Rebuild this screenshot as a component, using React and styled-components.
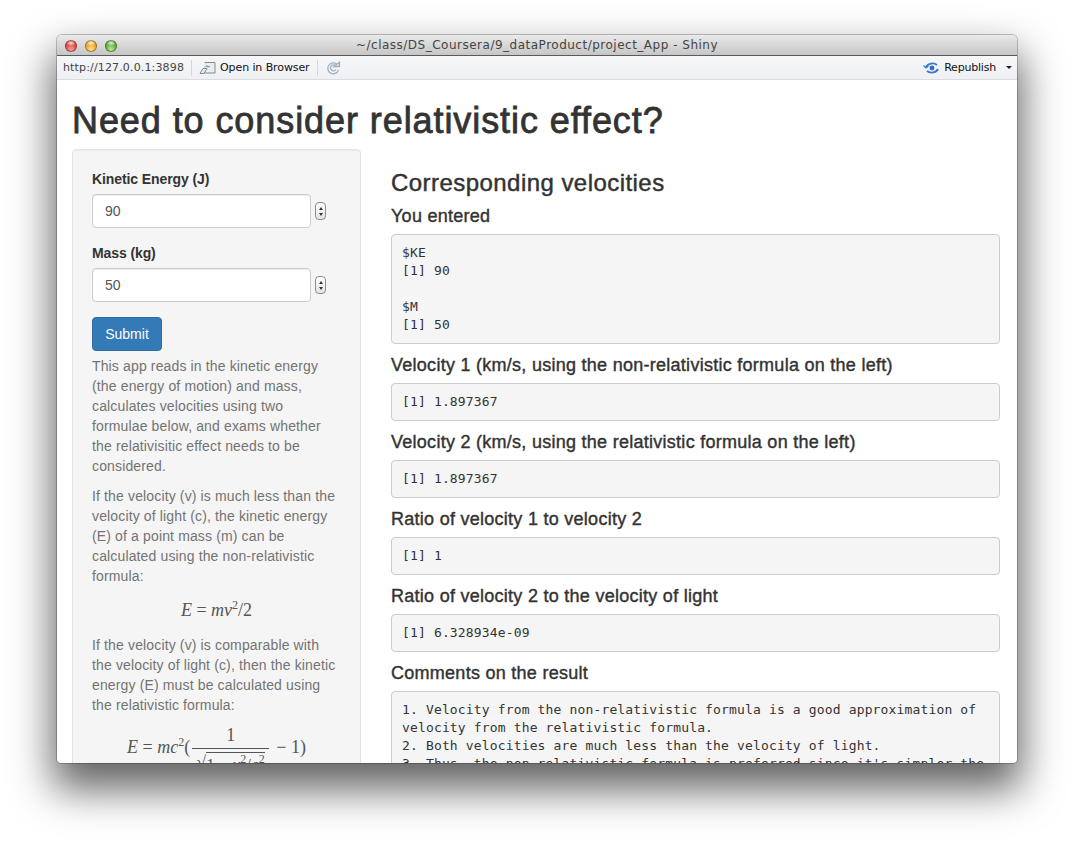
import styled, { createGlobalStyle } from "styled-components";

const Global = createGlobalStyle`
  html, body { margin: 0; padding: 0; background: #fff; }
  * { box-sizing: border-box; }
`;

const Page = styled.div`
  width: 1074px;
  height: 842px;
  padding: 35px 57px 0;
  overflow: hidden;
`;

const Win = styled.div`
  width: 960px;
  height: 728px;
  display: flex;
  flex-direction: column;
  border-radius: 5px 5px 4px 4px;
  overflow: hidden;
  background: #fff;
  box-shadow: 0 0 0 1px rgba(0, 0, 0, 0.22), 0 22px 42px 4px rgba(0, 0, 0, 0.62);
`;

const TitleBar = styled.div`
  height: 21px;
  flex: none;
  display: flex;
  align-items: center;
  justify-content: center;
  position: relative;
  background: linear-gradient(#e9e9e9, #c6c6c6);
  border-bottom: 1px solid #5a5a5a;
  font: 12px "DejaVu Sans", sans-serif;
  letter-spacing: 0.5px;
  color: #444;
`;

const Lights = styled.div`
  position: absolute;
  left: 8px;
  top: 5px;
  display: flex;
  gap: 8px;
`;

const Light = styled.span`
  width: 12px;
  height: 12px;
  border-radius: 50%;
  border: 1px solid rgba(0, 0, 0, 0.35);
  background: radial-gradient(ellipse 5px 3px at 50% 20%, rgba(255, 255, 255, 0.85), transparent),
    radial-gradient(circle at 50% 85%, ${(p) => p.$hi} 0%, ${(p) => p.$c} 65%);
`;

const ToolBar = styled.div`
  height: 24px;
  flex: none;
  display: flex;
  align-items: center;
  padding: 0 5px 0 6px;
  background: linear-gradient(#f6f7f9, #eef0f3);
  border-bottom: 1px solid #dcdcdc;
  font: 11px "DejaVu Sans", sans-serif;
  color: #111;
`;

const Url = styled.span`
  color: #444;
  letter-spacing: 0.15px;
`;

const Sep = styled.span`
  width: 1px;
  height: 16px;
  background: #d4d6d9;
  margin: 0 7px;
`;

const OpenLabel = styled.span`
  margin-left: 3px;
  letter-spacing: -0.1px;
`;

const Publish = styled.span`
  margin-left: auto;
  display: flex;
  align-items: center;
  gap: 3px;
  letter-spacing: -0.2px;
`;

const Caret = styled.span`
  width: 0;
  height: 0;
  margin-left: 7px;
  border-left: 3px solid transparent;
  border-right: 3px solid transparent;
  border-top: 3px solid #222;
`;

const Content = styled.div`
  flex: 1;
  overflow: hidden;
  padding: 0 15px;
  font: 14px/20px "Liberation Sans", sans-serif;
  color: #333;
`;

const H1 = styled.h1`
  margin: 21px 0 8px;
  font-size: 36px;
  line-height: 40px;
  font-weight: 500;
  letter-spacing: 0.92px;
  color: #333;
  -webkit-text-stroke: 0.8px #333;
`;

const Row = styled.div`
  display: flex;
  align-items: flex-start;
`;

const Side = styled.div`
  width: 289px;
  flex: none;
  padding: 19px;
  background: #f5f5f5;
  border: 1px solid #e3e3e3;
  border-radius: 4px;
  box-shadow: inset 0 1px 1px rgba(0, 0, 0, 0.05);
`;

const Field = styled.div`
  margin-bottom: 15px;
`;

const Label = styled.label`
  display: block;
  font-weight: bold;
  letter-spacing: -0.1px;
  margin-bottom: 5px;
`;

const InputRow = styled.div`
  display: flex;
  align-items: center;
`;

const Input = styled.div`
  width: 219px;
  height: 34px;
  padding: 6px 12px;
  background: #fff;
  border: 1px solid #ccc;
  border-radius: 4px;
  box-shadow: inset 0 1px 1px rgba(0, 0, 0, 0.075);
  color: #555;
`;

const Spin = styled.div`
  width: 11px;
  height: 18px;
  margin-left: 4px;
  border: 1px solid #8c8c8c;
  border-radius: 4px;
  background: linear-gradient(#fff, #e4e4e4);
  display: flex;
  flex-direction: column;
  align-items: center;
  justify-content: center;
  gap: 3px;
`;

const Arrow = styled.span`
  width: 0;
  height: 0;
  border-left: 2px solid transparent;
  border-right: 2px solid transparent;
  ${(p) => (p.$up ? "border-bottom: 3px solid #333;" : "border-top: 3px solid #333;")}
`;

const Submit = styled.div`
  width: 70px;
  height: 34px;
  display: flex;
  align-items: center;
  justify-content: center;
  margin-bottom: 5px;
  background: #337ab7;
  border: 1px solid #2e6da4;
  border-radius: 4px;
  color: #fff;
`;

const Help = styled.p`
  margin: 5px 0 10px;
  color: #737373;
  letter-spacing: 0.14px;
`;

const Formula = styled.div`
  text-align: center;
  margin: ${(p) => p.$m};
  font: 18px/20px "Liberation Serif", serif;
  color: #555;
  white-space: pre;

  sup { font-size: 12px; line-height: 0; vertical-align: 7px; }
`;

const Frac = styled.span`
  display: inline-flex;
  flex-direction: column;
  align-items: center;
  vertical-align: middle;
  margin: 0 7px 0 2px;
`;

const Num = styled.span`
  height: 24px;
  width: 77px;
  text-align: center;
  border-bottom: 1px solid #555;
`;

const Den = styled.span`
  display: flex;
  height: 24px;
  padding-top: 3px;
  line-height: 22px;
  font-size: 17px;
`;

const Radicand = styled.span`
  border-top: 1px solid #555;
  padding-top: 1px;
`;

const Main = styled.div`
  flex: 1;
  padding-left: 30px;
  padding-right: 2px;
`;

const H3 = styled.h3`
  margin: 21px 0 10px;
  font-size: 24px;
  line-height: 26px;
  font-weight: 500;
  letter-spacing: 0.45px;
  -webkit-text-stroke: 0.45px #333;
`;

const H4 = styled.h4`
  margin: 10px 0 8px;
  font-size: 18px;
  line-height: 20px;
  font-weight: 500;
  letter-spacing: 0.27px;
  -webkit-text-stroke: 0.4px #333;
`;

const Pre = styled.pre`
  margin: 0 0 11px;
  padding: 9px 10px;
  background: #f5f5f5;
  border: 1px solid #ccc;
  border-radius: 4px;
  font: 13px/18px "DejaVu Sans Mono", monospace;
  color: #333;
  letter-spacing: 0.15px;
  white-space: pre-wrap;
`;

const ReloadIcon = () => (
  <svg width="16" height="16" viewBox="0 0 16 16" fill="none" stroke="#9fb0c2" strokeWidth="1.3">
    <path d="M13 5.5A5.5 5.5 0 1 0 13.5 10" />
    <path d="M11 9.5A3 3 0 1 1 11 6.2" />
    <path d="M9 6.5h5.5V2z" fill="#dfe6ee" />
  </svg>
);

const OpenIcon = () => (
  <svg width="18" height="14" viewBox="0 0 18 14" fill="#e9edf2" stroke="#7f8b97" strokeWidth="1">
    <path d="M5.5 1.500h10.500v10.500H3" />
    <path d="M1 12.500l3-5h4l-3 5z" />
    <path d="M6 6.500l2-2v1.200h3" fill="none" />
  </svg>
);

const PublishIcon = () => (
  <svg width="18" height="12" viewBox="0 0 18 12" fill="none" stroke="#3b78c8" strokeWidth="1.8">
    <circle cx="9" cy="6" r="2.400" fill="#2f6fd0" stroke="none" />
    <path d="M3 5C5 1 11 0.500 14 3" />
    <path d="M0.500 3.500L3 6l2.500-2" strokeWidth="1.200" />
    <path d="M15 7c-2 4-8 4.500-11 2" />
  </svg>
);

const Number = ({ value }) => (
  <InputRow>
    <Input>{value}</Input>
    <Spin>
      <Arrow $up />
      <Arrow />
    </Spin>
  </InputRow>
);

const outputs = [
  ["Velocity 1 (km/s, using the non-relativistic formula on the left)", "[1] 1.897367"],
  ["Velocity 2 (km/s, using the relativistic formula on the left)", "[1] 1.897367"],
  ["Ratio of velocity 1 to velocity 2", "[1] 1"],
  ["Ratio of velocity 2 to the velocity of light", "[1] 6.328934e-09"],
];

const comments = `1. Velocity from the non-relativistic formula is a good approximation of velocity from the relativistic formula.
2. Both velocities are much less than the velocity of light.
3. Thus, the non-relativistic formula is preferred since it's simpler the`;

export default function App() {
  return (
    <Page>
      <Global />
      <Win>
        <TitleBar>
          <Lights>
            <Light $c="#d9403a" $hi="#ffa09a" />
            <Light $c="#e8a020" $hi="#ffe48a" />
            <Light $c="#58a83a" $hi="#b8ec90" />
          </Lights>
          ~/class/DS_Coursera/9_dataProduct/project_App - Shiny
        </TitleBar>
        <ToolBar>
          <Url>http://127.0.0.1:3898</Url>
          <Sep />
          <OpenIcon />
          <OpenLabel>Open in Browser</OpenLabel>
          <Sep />
          <ReloadIcon />
          <Publish>
            <PublishIcon />
            Republish
            <Caret />
          </Publish>
        </ToolBar>
        <Content>
          <H1>Need to consider relativistic effect?</H1>
          <Row>
            <Side>
              <Field>
                <Label>Kinetic Energy (J)</Label>
                <Number value="90" />
              </Field>
              <Field>
                <Label>Mass (kg)</Label>
                <Number value="50" />
              </Field>
              <Submit>Submit</Submit>
              <Help>
                This app reads in the kinetic energy (the energy of motion) and mass, calculates velocities using two
                formulae below, and exams whether the relativisitic effect needs to be considered.
              </Help>
              <Help>
                If the velocity (v) is much less than the velocity of light (c), the kinetic energy (E) of a point mass
                (m) can be calculated using the non-relativistic formula:
              </Help>
              <Formula $m="14px 0 15px">
                <i>E</i> = <i>mv</i>
                <sup>2</sup>/2
              </Formula>
              <Help>
                If the velocity (v) is comparable with the velocity of light (c), then the kinetic energy (E) must be
                calculated using the relativistic formula:
              </Help>
              <Formula $m="0">
                <i>E</i> = <i>mc</i>
                <sup>2</sup>(
                <Frac>
                  <Num>1</Num>
                  <Den>
                    √
                    <Radicand>
                      1 − <i>v</i>
                      <sup>2</sup>/<i>c</i>
                      <sup>2</sup>
                    </Radicand>
                  </Den>
                </Frac>
                − 1)
              </Formula>
            </Side>
            <Main>
              <H3>Corresponding velocities</H3>
              <H4>You entered</H4>
              <Pre>{"$KE\n[1] 90\n\n$M\n[1] 50"}</Pre>
              {outputs.map(([title, value]) => (
                <div key={title}>
                  <H4>{title}</H4>
                  <Pre>{value}</Pre>
                </div>
              ))}
              <H4>Comments on the result</H4>
              <Pre>{comments}</Pre>
            </Main>
          </Row>
        </Content>
      </Win>
    </Page>
  );
}
